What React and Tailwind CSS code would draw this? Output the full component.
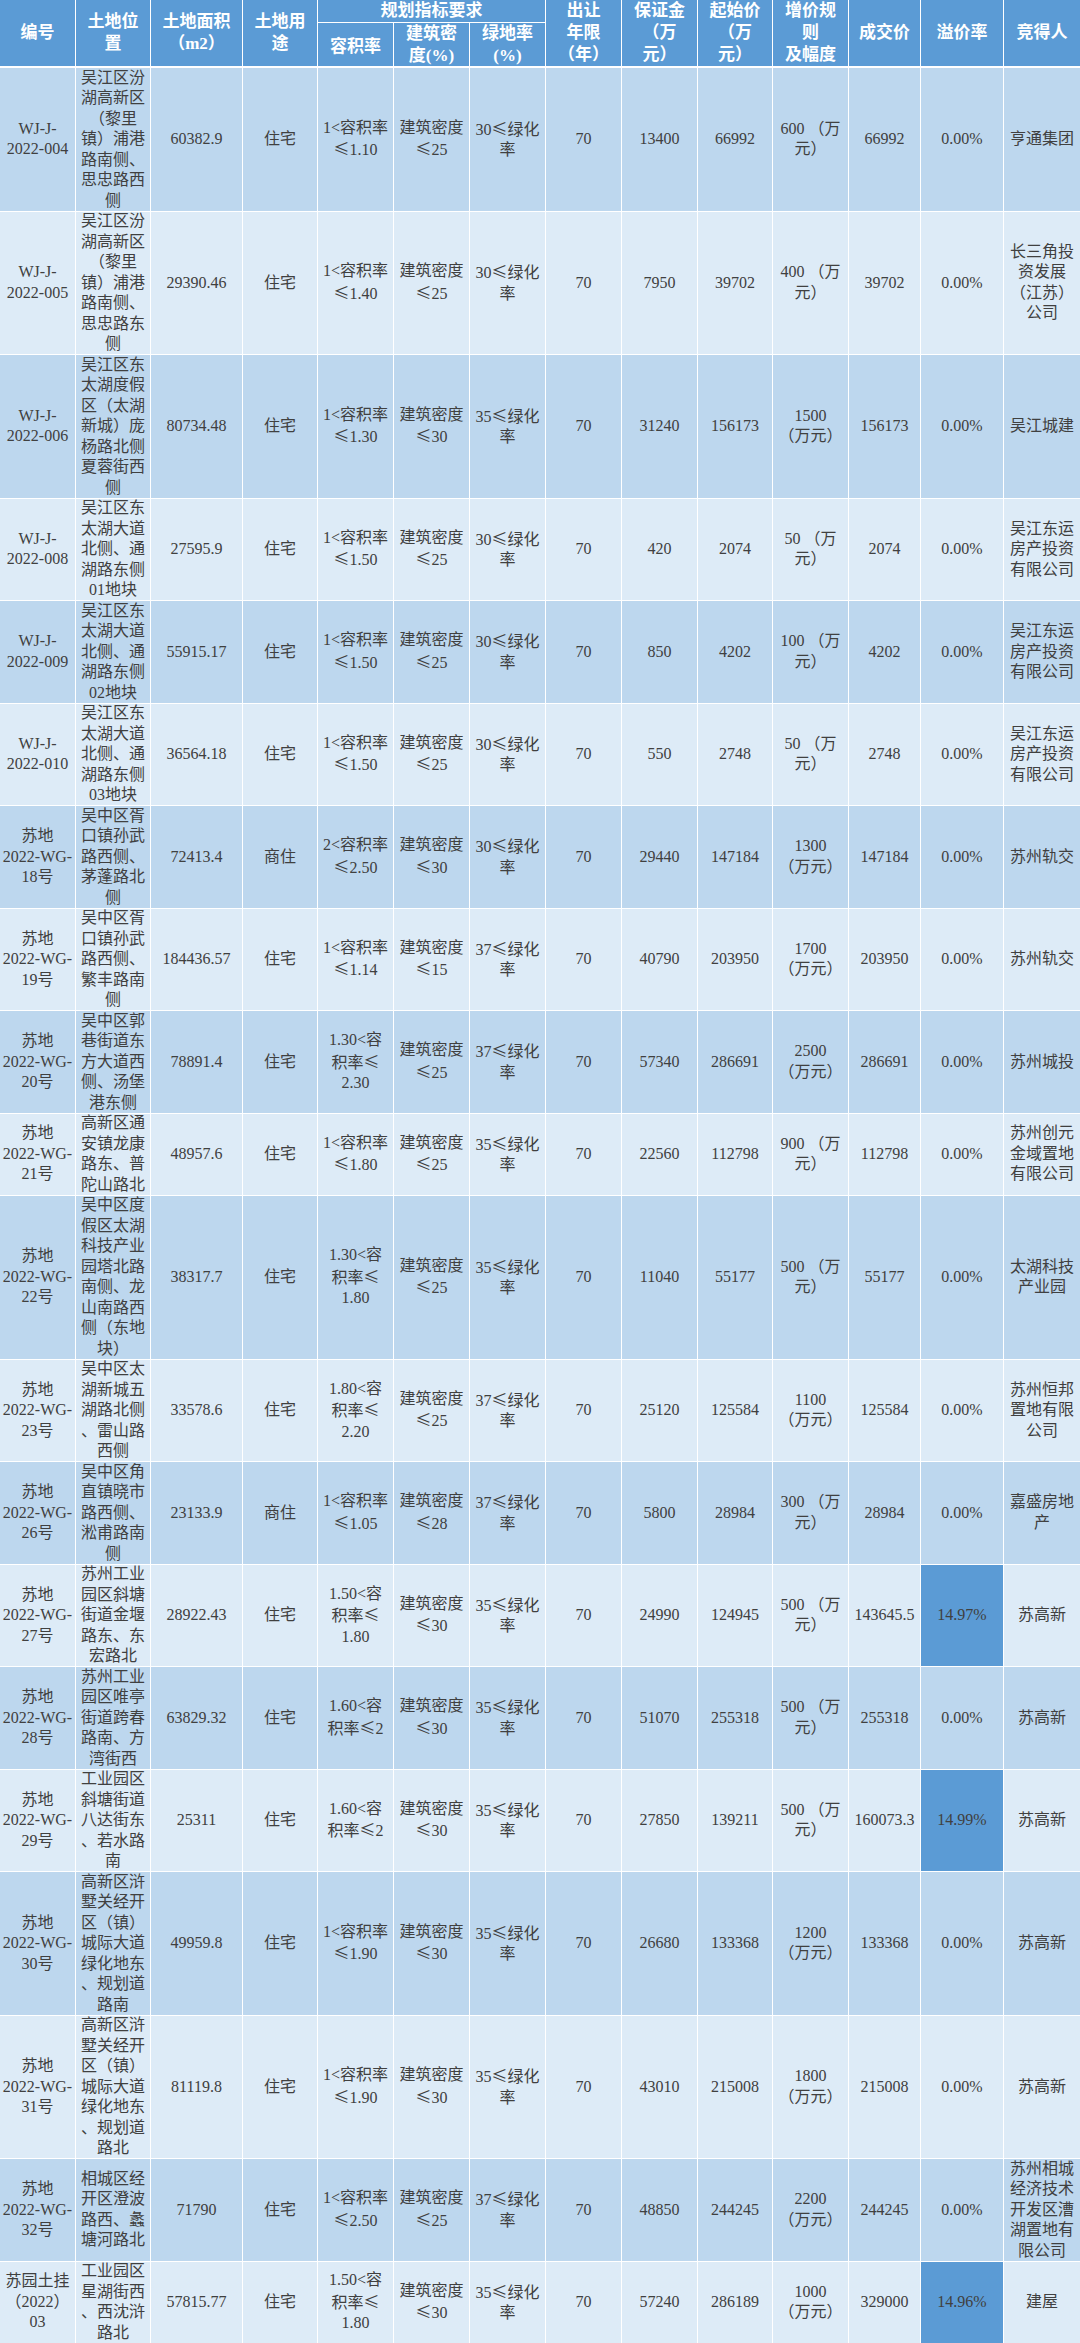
import React from "react";

const COLS =
  "grid grid-cols-[76px_75px_92px_75px_76px_76px_76px_76px_76px_75px_76px_72px_83px_76px]";

const H = {
  4: "h-[82px]",
  5: "h-[102.5px]",
  7: "h-[143.5px]",
  8: "h-[164px]",
};

const W = (a) => ["WJ-J-", "2022-0" + a];
const SD = (n) => ["苏地", "2022-WG-", n + "号"];
const DONG = ["吴江东运", "房产投资", "有限公司"];
const r1 = (v) => ["1<容积率", "≤" + v];
const wan = (n) => [n + " （万", "元）"];
const wan2 = (n) => [n, "（万元）"];

const rows = [
  { n: 7, id: W("04"), loc: ["吴江区汾", "湖高新区", "（黎里", "镇）浦港", "路南侧、", "思忠路西", "侧"], area: "60382.9", use: "住宅", far: r1("1.10"), den: "25", g: "30", dep: "13400", start: "66992", inc: wan("600"), deal: "66992", pr: "0.00%", win: ["亨通集团"] },
  { n: 7, id: W("05"), loc: ["吴江区汾", "湖高新区", "（黎里", "镇）浦港", "路南侧、", "思忠路东", "侧"], area: "29390.46", use: "住宅", far: r1("1.40"), den: "25", g: "30", dep: "7950", start: "39702", inc: wan("400"), deal: "39702", pr: "0.00%", win: ["长三角投", "资发展", "（江苏）", "公司"] },
  { n: 7, id: W("06"), loc: ["吴江区东", "太湖度假", "区（太湖", "新城）庞", "杨路北侧", "夏蓉街西", "侧"], area: "80734.48", use: "住宅", far: r1("1.30"), den: "30", g: "35", dep: "31240", start: "156173", inc: wan2("1500"), deal: "156173", pr: "0.00%", win: ["吴江城建"] },
  { n: 5, id: W("08"), loc: ["吴江区东", "太湖大道", "北侧、通", "湖路东侧", "01地块"], area: "27595.9", use: "住宅", far: r1("1.50"), den: "25", g: "30", dep: "420", start: "2074", inc: wan("50"), deal: "2074", pr: "0.00%", win: DONG },
  { n: 5, id: W("09"), loc: ["吴江区东", "太湖大道", "北侧、通", "湖路东侧", "02地块"], area: "55915.17", use: "住宅", far: r1("1.50"), den: "25", g: "30", dep: "850", start: "4202", inc: wan("100"), deal: "4202", pr: "0.00%", win: DONG },
  { n: 5, id: W("10"), loc: ["吴江区东", "太湖大道", "北侧、通", "湖路东侧", "03地块"], area: "36564.18", use: "住宅", far: r1("1.50"), den: "25", g: "30", dep: "550", start: "2748", inc: wan("50"), deal: "2748", pr: "0.00%", win: DONG },
  { n: 5, id: SD("18"), loc: ["吴中区胥", "口镇孙武", "路西侧、", "茅蓬路北", "侧"], area: "72413.4", use: "商住", far: ["2<容积率", "≤2.50"], den: "30", g: "30", dep: "29440", start: "147184", inc: wan2("1300"), deal: "147184", pr: "0.00%", win: ["苏州轨交"] },
  { n: 5, id: SD("19"), loc: ["吴中区胥", "口镇孙武", "路西侧、", "繁丰路南", "侧"], area: "184436.57", use: "住宅", far: r1("1.14"), den: "15", g: "37", dep: "40790", start: "203950", inc: wan2("1700"), deal: "203950", pr: "0.00%", win: ["苏州轨交"] },
  { n: 5, id: SD("20"), loc: ["吴中区郭", "巷街道东", "方大道西", "侧、汤堡", "港东侧"], area: "78891.4", use: "住宅", far: ["1.30<容", "积率≤", "2.30"], den: "25", g: "37", dep: "57340", start: "286691", inc: wan2("2500"), deal: "286691", pr: "0.00%", win: ["苏州城投"] },
  { n: 4, id: SD("21"), loc: ["高新区通", "安镇龙康", "路东、普", "陀山路北"], area: "48957.6", use: "住宅", far: r1("1.80"), den: "25", g: "35", dep: "22560", start: "112798", inc: wan("900"), deal: "112798", pr: "0.00%", win: ["苏州创元", "金域置地", "有限公司"] },
  { n: 8, id: SD("22"), loc: ["吴中区度", "假区太湖", "科技产业", "园塔北路", "南侧、龙", "山南路西", "侧（东地", "块）"], area: "38317.7", use: "住宅", far: ["1.30<容", "积率≤", "1.80"], den: "25", g: "35", dep: "11040", start: "55177", inc: wan("500"), deal: "55177", pr: "0.00%", win: ["太湖科技", "产业园"] },
  { n: 5, id: SD("23"), loc: ["吴中区太", "湖新城五", "湖路北侧", "、雷山路", "西侧"], area: "33578.6", use: "住宅", far: ["1.80<容", "积率≤", "2.20"], den: "25", g: "37", dep: "25120", start: "125584", inc: wan2("1100"), deal: "125584", pr: "0.00%", win: ["苏州恒邦", "置地有限", "公司"] },
  { n: 5, id: SD("26"), loc: ["吴中区角", "直镇晓市", "路西侧、", "淞甫路南", "侧"], area: "23133.9", use: "商住", far: r1("1.05"), den: "28", g: "37", dep: "5800", start: "28984", inc: wan("300"), deal: "28984", pr: "0.00%", win: ["嘉盛房地", "产"] },
  { n: 5, id: SD("27"), loc: ["苏州工业", "园区斜塘", "街道金堰", "路东、东", "宏路北"], area: "28922.43", use: "住宅", far: ["1.50<容", "积率≤", "1.80"], den: "30", g: "35", dep: "24990", start: "124945", inc: wan("500"), deal: "143645.5", pr: "14.97%", hl: true, win: ["苏高新"] },
  { n: 5, id: SD("28"), loc: ["苏州工业", "园区唯亭", "街道跨春", "路南、方", "湾街西"], area: "63829.32", use: "住宅", far: ["1.60<容", "积率≤2"], den: "30", g: "35", dep: "51070", start: "255318", inc: wan("500"), deal: "255318", pr: "0.00%", win: ["苏高新"] },
  { n: 5, id: SD("29"), loc: ["工业园区", "斜塘街道", "八达街东", "、若水路", "南"], area: "25311", use: "住宅", far: ["1.60<容", "积率≤2"], den: "30", g: "35", dep: "27850", start: "139211", inc: wan("500"), deal: "160073.3", pr: "14.99%", hl: true, win: ["苏高新"] },
  { n: 7, id: SD("30"), loc: ["高新区浒", "墅关经开", "区（镇）", "城际大道", "绿化地东", "、规划道", "路南"], area: "49959.8", use: "住宅", far: r1("1.90"), den: "30", g: "35", dep: "26680", start: "133368", inc: wan2("1200"), deal: "133368", pr: "0.00%", win: ["苏高新"] },
  { n: 7, id: SD("31"), loc: ["高新区浒", "墅关经开", "区（镇）", "城际大道", "绿化地东", "、规划道", "路北"], area: "81119.8", use: "住宅", far: r1("1.90"), den: "30", g: "35", dep: "43010", start: "215008", inc: wan2("1800"), deal: "215008", pr: "0.00%", win: ["苏高新"] },
  { n: 5, id: SD("32"), loc: ["相城区经", "开区澄波", "路西、蠡", "塘河路北"], area: "71790", use: "住宅", far: r1("2.50"), den: "25", g: "37", dep: "48850", start: "244245", inc: wan2("2200"), deal: "244245", pr: "0.00%", win: ["苏州相城", "经济技术", "开发区漕", "湖置地有", "限公司"] },
  { n: 4, id: ["苏园土挂", "（2022）", "03"], loc: ["工业园区", "星湖街西", "、西沈浒", "路北"], area: "57815.77", use: "住宅", far: ["1.50<容", "积率≤", "1.80"], den: "30", g: "35", dep: "57240", start: "286189", inc: wan2("1000"), deal: "329000", pr: "14.96%", hl: true, win: ["建屋"] },
];

function Txt({ t }) {
  const parts = t.split("≤");
  return (
    <>
      {parts.map((p, i) => (
        <React.Fragment key={i}>
          {i > 0 && <span className="font-['Noto_Sans_CJK_SC']">≤</span>}
          {p}
        </React.Fragment>
      ))}
    </>
  );
}

function Lines({ v }) {
  const arr = Array.isArray(v) ? v : [v];
  return (
    <div className="flex flex-col items-center">
      {arr.map((t, i) => (
        <div key={i} className="whitespace-nowrap">
          <Txt t={t} />
        </div>
      ))}
    </div>
  );
}

function Cell({ v, bg, last }) {
  return (
    <div
      className={
        "flex items-center justify-center overflow-hidden border-b border-white text-center " +
        (last ? "" : "border-r ") +
        bg
      }
    >
      <Lines v={v} />
    </div>
  );
}

function HCell({ children, cls }) {
  return (
    <div
      className={
        "flex items-center justify-center border-r border-white bg-[#5b9bd5] text-center " +
        cls
      }
    >
      <div className="flex flex-col items-center">{children}</div>
    </div>
  );
}

function Header() {
  const L = (t) => <div className="whitespace-nowrap">{t}</div>;
  return (
    <div
      className={
        COLS +
        " grid-rows-[23px_43px] border-b-2 border-white text-[17px] font-bold leading-[22px] text-white"
      }
    >
      <HCell cls="col-start-1 row-start-1 row-span-2">{L("编号")}</HCell>
      <HCell cls="col-start-2 row-start-1 row-span-2">
        {L("土地位")}
        {L("置")}
      </HCell>
      <HCell cls="col-start-3 row-start-1 row-span-2">
        {L("土地面积")}
        {L("（m2）")}
      </HCell>
      <HCell cls="col-start-4 row-start-1 row-span-2">
        {L("土地用")}
        {L("途")}
      </HCell>
      <HCell cls="col-start-5 col-span-3 row-start-1 border-b">{L("规划指标要求")}</HCell>
      <HCell cls="col-start-5 row-start-2 pt-1">{L("容积率")}</HCell>
      <HCell cls="col-start-6 row-start-2">
        {L("建筑密")}
        {L("度(%)")}
      </HCell>
      <HCell cls="col-start-7 row-start-2">
        {L("绿地率")}
        {L("(%)")}
      </HCell>
      <HCell cls="col-start-8 row-start-1 row-span-2">
        {L("出让")}
        {L("年限")}
        {L("（年）")}
      </HCell>
      <HCell cls="col-start-9 row-start-1 row-span-2">
        {L("保证金")}
        {L("（万")}
        {L("元）")}
      </HCell>
      <HCell cls="col-start-10 row-start-1 row-span-2">
        {L("起始价")}
        {L("（万")}
        {L("元）")}
      </HCell>
      <HCell cls="col-start-11 row-start-1 row-span-2">
        {L("增价规")}
        {L("则")}
        {L("及幅度")}
      </HCell>
      <HCell cls="col-start-12 row-start-1 row-span-2">{L("成交价")}</HCell>
      <HCell cls="col-start-13 row-start-1 row-span-2">{L("溢价率")}</HCell>
      <HCell cls="col-start-14 row-start-1 row-span-2 border-r-0">{L("竞得人")}</HCell>
    </div>
  );
}

export default function App() {
  return (
    <div
      className="h-[2343px] w-[1080px] overflow-hidden bg-[#ddebf7] text-[#404040]"
      style={{ fontFamily: '"Liberation Serif", "Noto Sans CJK SC", serif' }}
    >
      <Header />
      <div className="text-[16px] leading-[20.5px]">
        {rows.map((r, i) => {
          const bg = i % 2 === 0 ? "bg-[#bdd7ee]" : "bg-[#ddebf7]";
          return (
            <div key={i} className={COLS + " " + H[r.n]}>
              <Cell v={r.id} bg={bg} />
              <Cell v={r.loc} bg={bg} />
              <Cell v={r.area} bg={bg} />
              <Cell v={r.use} bg={bg} />
              <Cell v={r.far} bg={bg} />
              <Cell v={["建筑密度", "≤" + r.den]} bg={bg} />
              <Cell v={[r.g + "≤绿化", "率"]} bg={bg} />
              <Cell v="70" bg={bg} />
              <Cell v={r.dep} bg={bg} />
              <Cell v={r.start} bg={bg} />
              <Cell v={r.inc} bg={bg} />
              <Cell v={r.deal} bg={bg} />
              <Cell v={r.pr} bg={r.hl ? "bg-[#5b9bd5]" : bg} />
              <Cell v={r.win} bg={bg} last />
            </div>
          );
        })}
      </div>
    </div>
  );
}
